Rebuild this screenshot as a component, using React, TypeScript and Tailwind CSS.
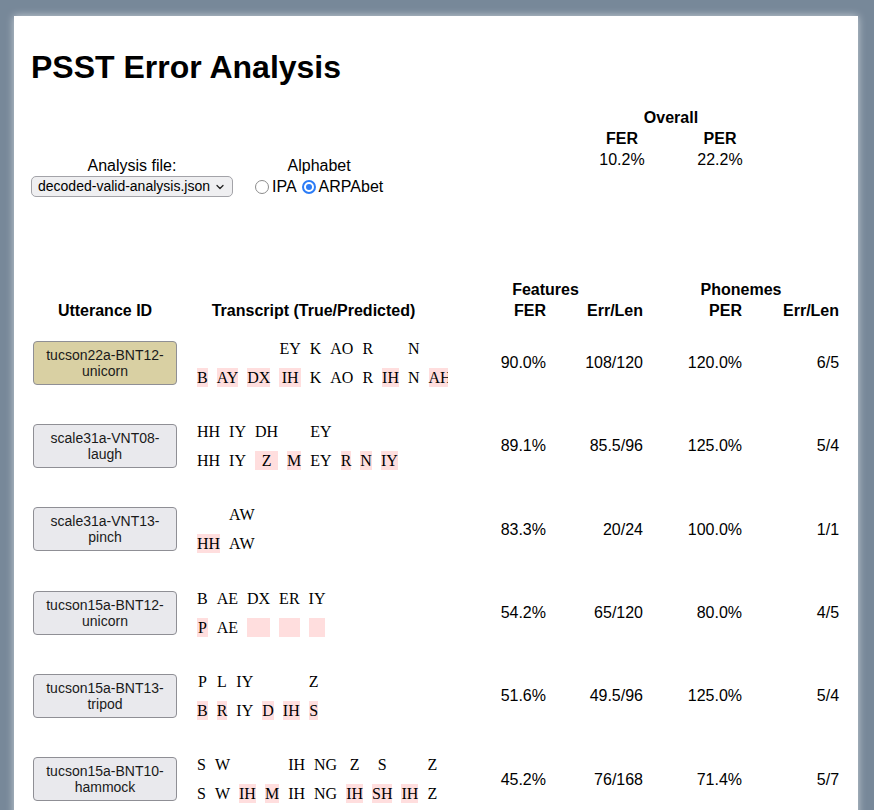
import React from "react";

type Row = {
  id: string;
  truth: string[];
  pred: string[];
  errs: number[];
  fer: string;
  fLen: string;
  per: string;
  pLen: string;
};

const rows: Row[] = [
  {
    id: "tucson22a-BNT12-unicorn",
    truth: ["", "", "", "EY", "K", "AO", "R", "", "N", ""],
    pred: ["B", "AY", "DX", "IH", "K", "AO", "R", "IH", "N", "AH"],
    errs: [0, 1, 2, 3, 7, 9],
    fer: "90.0%",
    fLen: "108/120",
    per: "120.0%",
    pLen: "6/5",
  },
  {
    id: "scale31a-VNT08-laugh",
    truth: ["HH", "IY", "DH", "", "EY", "", "", ""],
    pred: ["HH", "IY", "Z", "M", "EY", "R", "N", "IY"],
    errs: [2, 3, 5, 6, 7],
    fer: "89.1%",
    fLen: "85.5/96",
    per: "125.0%",
    pLen: "5/4",
  },
  {
    id: "scale31a-VNT13-pinch",
    truth: ["", "AW"],
    pred: ["HH", "AW"],
    errs: [0],
    fer: "83.3%",
    fLen: "20/24",
    per: "100.0%",
    pLen: "1/1",
  },
  {
    id: "tucson15a-BNT12-unicorn",
    truth: ["B", "AE", "DX", "ER", "IY"],
    pred: ["P", "AE", "", "", ""],
    errs: [0, 2, 3, 4],
    fer: "54.2%",
    fLen: "65/120",
    per: "80.0%",
    pLen: "4/5",
  },
  {
    id: "tucson15a-BNT13-tripod",
    truth: ["P", "L", "IY", "", "", "Z"],
    pred: ["B", "R", "IY", "D", "IH", "S"],
    errs: [0, 1, 3, 4, 5],
    fer: "51.6%",
    fLen: "49.5/96",
    per: "125.0%",
    pLen: "5/4",
  },
  {
    id: "tucson15a-BNT10-hammock",
    truth: ["S", "W", "", "", "IH", "NG", "Z", "S", "", "Z"],
    pred: ["S", "W", "IH", "M", "IH", "NG", "IH", "SH", "IH", "Z"],
    errs: [2, 3, 6, 7, 8],
    fer: "45.2%",
    fLen: "76/168",
    per: "71.4%",
    pLen: "5/7",
  },
];

// true phones above, predicted below; wrong predictions get a pink cell
const Transcript: React.FC<{ row: Row }> = ({ row }) => (
  <div className="w-[269px] overflow-hidden pl-[9px]">
    <table className="border-separate border-spacing-x-[9.5px] border-spacing-y-[10px] whitespace-nowrap font-['Liberation_Serif',serif] text-[16px] leading-[19px]">
      <tbody>
        <tr>
          {row.truth.map((p, i) => (
            <td key={i} className="p-0 text-center">
              {p}
            </td>
          ))}
        </tr>
        <tr>
          {row.pred.map((p, i) => (
            <td
              key={i}
              className={`p-0 text-center ${row.errs.includes(i) ? "bg-[#ffdede]" : ""}`}
            >
              {p}
            </td>
          ))}
        </tr>
      </tbody>
    </table>
  </div>
);

const Radio: React.FC<{ checked?: boolean }> = ({ checked }) =>
  checked ? (
    <span className="flex h-[14px] w-[14px] items-center justify-center rounded-full border-[2px] border-[#2c7cf6] bg-white">
      <span className="h-[6px] w-[6px] rounded-full bg-[#2c7cf6]" />
    </span>
  ) : (
    <span className="h-[14px] w-[14px] rounded-full border border-[#8c8c8c] bg-white" />
  );

export default function App() {
  return (
    <div className="min-h-screen bg-[#778899] pl-[14px] pr-[16px] pt-[16px] font-['Liberation_Sans',Arial,sans-serif] text-black">
      <div className="min-h-[860px] bg-white px-[17px] pt-[33px] shadow-[0_0_8px_rgba(255,255,255,0.6)]">
        <h1 className="m-0 text-[32px] font-bold leading-[37px]">PSST Error Analysis</h1>

        <div className="mt-[21px] flex items-start">
          {/* controls */}
          <div className="flex pt-[48px] text-[16px] leading-[21px]">
            <div className="flex w-[202px] flex-col items-center">
              <span>Analysis file:</span>
              <div className="flex h-[21px] w-[202px] items-center justify-between rounded-[5px] border border-[#a3a3a8] bg-[#efeff1] pl-[6px] pr-[8px] text-[14px]">
                <span>decoded-valid-analysis.json</span>
                <svg width="8" height="6" viewBox="0 0 8 6" fill="none">
                  <path d="M1 1.5L4 4.5L7 1.5" stroke="#222" strokeWidth="1.3" strokeLinecap="round" strokeLinejoin="round" />
                </svg>
              </div>
            </div>
            <div className="ml-[22px] flex flex-col items-center">
              <span>Alphabet</span>
              <div className="flex items-center">
                <Radio />
                <span className="ml-[3px] mr-[5px]">IPA</span>
                <Radio checked />
                <span className="ml-[3px]">ARPAbet</span>
              </div>
            </div>
          </div>

          {/* overall */}
          <table className="ml-auto mr-[72px] w-[196px] table-fixed border-collapse text-center text-[16px] leading-[21px]">
            <tbody>
              <tr>
                <th colSpan={2} className="p-0 font-bold">Overall</th>
              </tr>
              <tr>
                <th className="p-0 font-bold">FER</th>
                <th className="p-0 font-bold">PER</th>
              </tr>
              <tr>
                <td className="p-0">10.2%</td>
                <td className="p-0">22.2%</td>
              </tr>
            </tbody>
          </table>
        </div>

        <table className="mt-[82px] w-[808px] table-fixed border-collapse text-[16px] leading-[21px]">
          <colgroup>
            <col className="w-[148px]" />
            <col className="w-[269px]" />
            <col className="w-[98px]" />
            <col className="w-[97px]" />
            <col className="w-[99px]" />
            <col className="w-[97px]" />
          </colgroup>
          <thead>
            <tr>
              <th className="p-0" />
              <th className="p-0" />
              <th colSpan={2} className="p-0 text-center font-bold">Features</th>
              <th colSpan={2} className="p-0 text-center font-bold">Phonemes</th>
            </tr>
            <tr>
              <th className="p-0 text-center font-bold">Utterance ID</th>
              <th className="p-0 text-center font-bold">Transcript (True/Predicted)</th>
              <th className="p-0 text-right font-bold">FER</th>
              <th className="p-0 text-right font-bold">Err/Len</th>
              <th className="p-0 text-right font-bold">PER</th>
              <th className="p-0 text-right font-bold">Err/Len</th>
            </tr>
          </thead>
          <tbody>
            {rows.map((r, i) => (
              <tr key={r.id} className="h-[83.3px]">
                <td className="p-0 text-center align-middle">
                  <button
                    className={`mx-auto flex h-[44px] w-[144px] items-center justify-center rounded-[4px] border border-[#8f8f95] px-[6px] text-center text-[14px] leading-[16px] text-[#1a1a1a] ${
                      i === 0 ? "bg-[#d9d0a3]" : "bg-[#e9e9ed]"
                    }`}
                  >
                    {r.id}
                  </button>
                </td>
                <td className="p-0 align-middle">
                  <Transcript row={r} />
                </td>
                <td className="p-0 text-right align-middle">{r.fer}</td>
                <td className="p-0 text-right align-middle">{r.fLen}</td>
                <td className="p-0 text-right align-middle">{r.per}</td>
                <td className="p-0 text-right align-middle">{r.pLen}</td>
              </tr>
            ))}
          </tbody>
        </table>
      </div>
    </div>
  );
}
